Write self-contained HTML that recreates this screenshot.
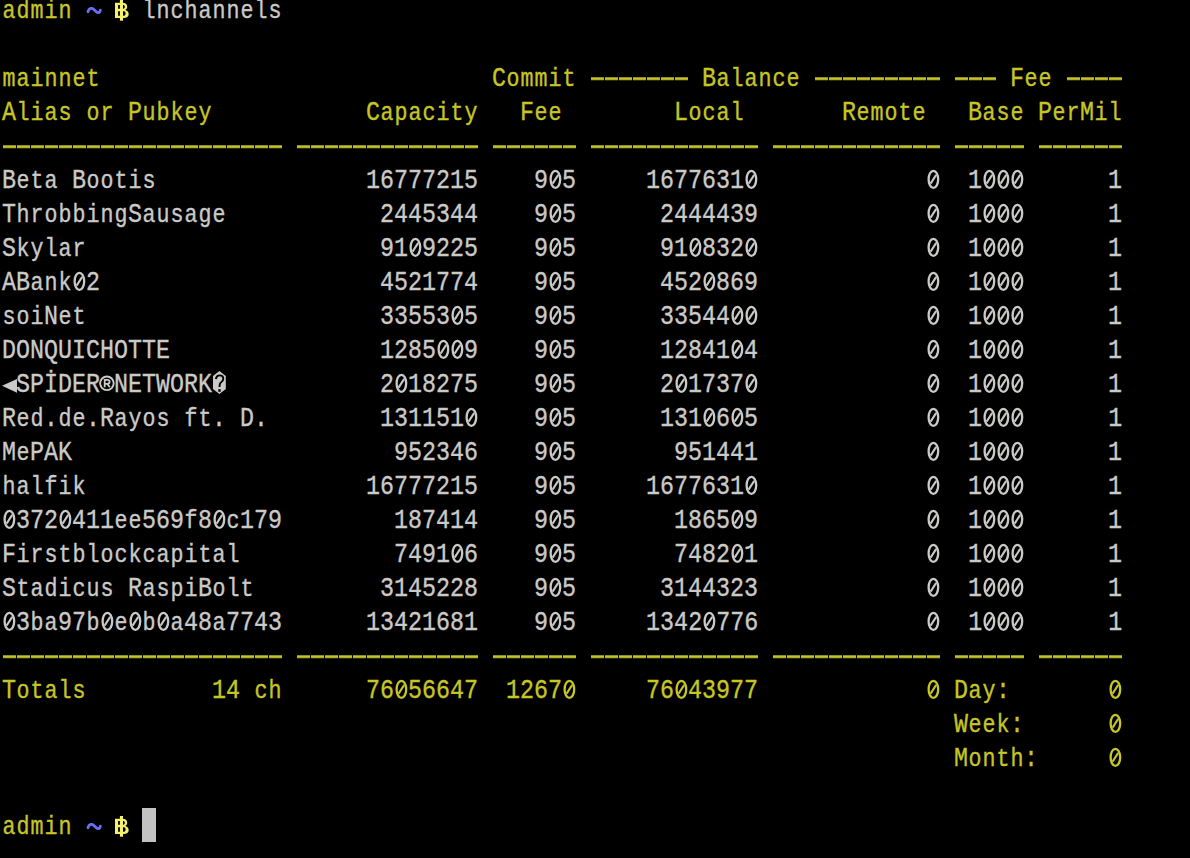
<!DOCTYPE html>
<html><head><meta charset="utf-8"><style>
html,body{margin:0;padding:0;background:#000;}
body{width:1190px;height:858px;overflow:hidden;position:relative;}
.t{position:absolute;white-space:pre;font-family:"Liberation Mono",monospace;font-size:27.8px;line-height:34px;height:34px;transform:scaleX(0.83933);transform-origin:0 0;-webkit-text-stroke:0.35px currentColor;}
.z{position:absolute;display:block}
.l{font-size:25.8px;letter-spacing:1.200px;position:relative;left:0.600px;}
.d{position:absolute;height:4px;background:repeating-linear-gradient(90deg,transparent 0,transparent 13px,#000 13px,#000 14px),linear-gradient(180deg,rgb(140,140,34) 0,rgb(140,140,34) 1px,rgb(195,196,42) 1px,rgb(195,196,42) 2px,rgb(172,174,32) 2px,rgb(172,174,32) 3px,rgb(45,45,8) 3px,rgb(45,45,8) 4px);}
</style></head><body>

<div class="t" style="left:2.00px;top:-6px;color:rgb(198,198,36)"><span class="l">admin</span></div>
<div class="t" style="left:142.00px;top:-6px;color:rgb(202,202,200)"><span class="l">lnchannels</span></div>
<div class="t" style="left:2.00px;top:62px;color:rgb(198,198,36)"><span class="l">mainnet</span></div>
<div class="t" style="left:492.00px;top:62px;color:rgb(198,198,36)">C<span class="l">ommit</span></div>
<div class="t" style="left:702.00px;top:62px;color:rgb(198,198,36)">B<span class="l">alance</span></div>
<div class="t" style="left:1010.00px;top:62px;color:rgb(198,198,36)">F<span class="l">ee</span></div>
<div class="t" style="left:2.00px;top:96px;color:rgb(198,198,36)">A<span class="l">lias</span> <span class="l">or</span> P<span class="l">ubkey</span></div>
<div class="t" style="left:366.00px;top:96px;color:rgb(198,198,36)">C<span class="l">apacity</span></div>
<div class="t" style="left:520.00px;top:96px;color:rgb(198,198,36)">F<span class="l">ee</span></div>
<div class="t" style="left:674.00px;top:96px;color:rgb(198,198,36)">L<span class="l">ocal</span></div>
<div class="t" style="left:842.00px;top:96px;color:rgb(198,198,36)">R<span class="l">emote</span></div>
<div class="t" style="left:968.00px;top:96px;color:rgb(198,198,36)">B<span class="l">ase</span></div>
<div class="t" style="left:1038.00px;top:96px;color:rgb(198,198,36)">P<span class="l">er</span>M<span class="l">il</span></div>
<div class="t" style="left:2.00px;top:164px;color:rgb(202,202,200)">B<span class="l">eta</span> B<span class="l">ootis</span>               16777215    9 5     1677631                1         1</div>
<div class="t" style="left:2.00px;top:198px;color:rgb(202,202,200)">T<span class="l">hrobbing</span>S<span class="l">ausage</span>           2445344    9 5      2444439               1         1</div>
<div class="t" style="left:2.00px;top:232px;color:rgb(202,202,200)">S<span class="l">kylar</span>                     91 9225    9 5      91 832                1         1</div>
<div class="t" style="left:2.00px;top:266px;color:rgb(202,202,200)">AB<span class="l">ank</span> 2                    4521774    9 5      452 869               1         1</div>
<div class="t" style="left:2.00px;top:300px;color:rgb(202,202,200)"><span class="l">soi</span>N<span class="l">et</span>                     33553 5    9 5      33544                 1         1</div>
<div class="t" style="left:2.00px;top:334px;color:rgb(202,202,200)">DONQUICHOTTE               1285  9    9 5      12841 4               1         1</div>
<div class="t" style="left:2.00px;top:368px;color:rgb(202,202,200)"> SPİDER NETWORK            2 18275    9 5      2 1737                1         1</div>
<div class="t" style="left:2.00px;top:402px;color:rgb(202,202,200)">R<span class="l">ed</span>.<span class="l">de</span>.R<span class="l">ayos</span> <span class="l">ft</span>. D.        131151     9 5      131 6 5               1         1</div>
<div class="t" style="left:2.00px;top:436px;color:rgb(202,202,200)">M<span class="l">e</span>PAK                       952346    9 5       951441               1         1</div>
<div class="t" style="left:2.00px;top:470px;color:rgb(202,202,200)"><span class="l">halfik</span>                    16777215    9 5     1677631                1         1</div>
<div class="t" style="left:2.00px;top:504px;color:rgb(202,202,200)"> 372 411<span class="l">ee</span>569<span class="l">f</span>8 <span class="l">c</span>179        187414    9 5       1865 9               1         1</div>
<div class="t" style="left:2.00px;top:538px;color:rgb(202,202,200)">F<span class="l">irstblockcapital</span>           7491 6    9 5       7482 1               1         1</div>
<div class="t" style="left:2.00px;top:572px;color:rgb(202,202,200)">S<span class="l">tadicus</span> R<span class="l">aspi</span>B<span class="l">olt</span>         3145228    9 5      3144323               1         1</div>
<div class="t" style="left:2.00px;top:606px;color:rgb(202,202,200)"> 3<span class="l">ba</span>97<span class="l">b</span> <span class="l">e</span> <span class="l">b</span> <span class="l">a</span>48<span class="l">a</span>7743      13421681    9 5     1342 776               1         1</div>
<div class="t" style="left:2.00px;top:674px;color:rgb(198,198,36)">T<span class="l">otals</span>         14 <span class="l">ch</span>      76 56647  1267      76 43977              D<span class="l">ay</span>:        </div>
<div class="t" style="left:954.00px;top:708px;color:rgb(198,198,36)">W<span class="l">eek</span>:       </div>
<div class="t" style="left:954.00px;top:742px;color:rgb(198,198,36)">M<span class="l">onth</span>:      </div>
<div class="t" style="left:2.00px;top:810px;color:rgb(198,198,36)"><span class="l">admin</span></div>
<svg class="z" style="left:548px;top:162px" width="14" height="34"><ellipse cx="7.4" cy="17.3" rx="4.8" ry="8.5" fill="none" stroke="rgb(202,202,200)" stroke-width="2.3"/><path d="M4.6 21.6L10.2 12.9" stroke="rgb(202,202,200)" stroke-width="2.0"/></svg>
<svg class="z" style="left:744px;top:162px" width="14" height="34"><ellipse cx="7.4" cy="17.3" rx="4.8" ry="8.5" fill="none" stroke="rgb(202,202,200)" stroke-width="2.3"/><path d="M4.6 21.6L10.2 12.9" stroke="rgb(202,202,200)" stroke-width="2.0"/></svg>
<svg class="z" style="left:926px;top:162px" width="14" height="34"><ellipse cx="7.4" cy="17.3" rx="4.8" ry="8.5" fill="none" stroke="rgb(202,202,200)" stroke-width="2.3"/><path d="M4.6 21.6L10.2 12.9" stroke="rgb(202,202,200)" stroke-width="2.0"/></svg>
<svg class="z" style="left:982px;top:162px" width="14" height="34"><ellipse cx="7.4" cy="17.3" rx="4.8" ry="8.5" fill="none" stroke="rgb(202,202,200)" stroke-width="2.3"/><path d="M4.6 21.6L10.2 12.9" stroke="rgb(202,202,200)" stroke-width="2.0"/></svg>
<svg class="z" style="left:996px;top:162px" width="14" height="34"><ellipse cx="7.4" cy="17.3" rx="4.8" ry="8.5" fill="none" stroke="rgb(202,202,200)" stroke-width="2.3"/><path d="M4.6 21.6L10.2 12.9" stroke="rgb(202,202,200)" stroke-width="2.0"/></svg>
<svg class="z" style="left:1010px;top:162px" width="14" height="34"><ellipse cx="7.4" cy="17.3" rx="4.8" ry="8.5" fill="none" stroke="rgb(202,202,200)" stroke-width="2.3"/><path d="M4.6 21.6L10.2 12.9" stroke="rgb(202,202,200)" stroke-width="2.0"/></svg>
<svg class="z" style="left:548px;top:196px" width="14" height="34"><ellipse cx="7.4" cy="17.3" rx="4.8" ry="8.5" fill="none" stroke="rgb(202,202,200)" stroke-width="2.3"/><path d="M4.6 21.6L10.2 12.9" stroke="rgb(202,202,200)" stroke-width="2.0"/></svg>
<svg class="z" style="left:926px;top:196px" width="14" height="34"><ellipse cx="7.4" cy="17.3" rx="4.8" ry="8.5" fill="none" stroke="rgb(202,202,200)" stroke-width="2.3"/><path d="M4.6 21.6L10.2 12.9" stroke="rgb(202,202,200)" stroke-width="2.0"/></svg>
<svg class="z" style="left:982px;top:196px" width="14" height="34"><ellipse cx="7.4" cy="17.3" rx="4.8" ry="8.5" fill="none" stroke="rgb(202,202,200)" stroke-width="2.3"/><path d="M4.6 21.6L10.2 12.9" stroke="rgb(202,202,200)" stroke-width="2.0"/></svg>
<svg class="z" style="left:996px;top:196px" width="14" height="34"><ellipse cx="7.4" cy="17.3" rx="4.8" ry="8.5" fill="none" stroke="rgb(202,202,200)" stroke-width="2.3"/><path d="M4.6 21.6L10.2 12.9" stroke="rgb(202,202,200)" stroke-width="2.0"/></svg>
<svg class="z" style="left:1010px;top:196px" width="14" height="34"><ellipse cx="7.4" cy="17.3" rx="4.8" ry="8.5" fill="none" stroke="rgb(202,202,200)" stroke-width="2.3"/><path d="M4.6 21.6L10.2 12.9" stroke="rgb(202,202,200)" stroke-width="2.0"/></svg>
<svg class="z" style="left:408px;top:230px" width="14" height="34"><ellipse cx="7.4" cy="17.3" rx="4.8" ry="8.5" fill="none" stroke="rgb(202,202,200)" stroke-width="2.3"/><path d="M4.6 21.6L10.2 12.9" stroke="rgb(202,202,200)" stroke-width="2.0"/></svg>
<svg class="z" style="left:548px;top:230px" width="14" height="34"><ellipse cx="7.4" cy="17.3" rx="4.8" ry="8.5" fill="none" stroke="rgb(202,202,200)" stroke-width="2.3"/><path d="M4.6 21.6L10.2 12.9" stroke="rgb(202,202,200)" stroke-width="2.0"/></svg>
<svg class="z" style="left:688px;top:230px" width="14" height="34"><ellipse cx="7.4" cy="17.3" rx="4.8" ry="8.5" fill="none" stroke="rgb(202,202,200)" stroke-width="2.3"/><path d="M4.6 21.6L10.2 12.9" stroke="rgb(202,202,200)" stroke-width="2.0"/></svg>
<svg class="z" style="left:744px;top:230px" width="14" height="34"><ellipse cx="7.4" cy="17.3" rx="4.8" ry="8.5" fill="none" stroke="rgb(202,202,200)" stroke-width="2.3"/><path d="M4.6 21.6L10.2 12.9" stroke="rgb(202,202,200)" stroke-width="2.0"/></svg>
<svg class="z" style="left:926px;top:230px" width="14" height="34"><ellipse cx="7.4" cy="17.3" rx="4.8" ry="8.5" fill="none" stroke="rgb(202,202,200)" stroke-width="2.3"/><path d="M4.6 21.6L10.2 12.9" stroke="rgb(202,202,200)" stroke-width="2.0"/></svg>
<svg class="z" style="left:982px;top:230px" width="14" height="34"><ellipse cx="7.4" cy="17.3" rx="4.8" ry="8.5" fill="none" stroke="rgb(202,202,200)" stroke-width="2.3"/><path d="M4.6 21.6L10.2 12.9" stroke="rgb(202,202,200)" stroke-width="2.0"/></svg>
<svg class="z" style="left:996px;top:230px" width="14" height="34"><ellipse cx="7.4" cy="17.3" rx="4.8" ry="8.5" fill="none" stroke="rgb(202,202,200)" stroke-width="2.3"/><path d="M4.6 21.6L10.2 12.9" stroke="rgb(202,202,200)" stroke-width="2.0"/></svg>
<svg class="z" style="left:1010px;top:230px" width="14" height="34"><ellipse cx="7.4" cy="17.3" rx="4.8" ry="8.5" fill="none" stroke="rgb(202,202,200)" stroke-width="2.3"/><path d="M4.6 21.6L10.2 12.9" stroke="rgb(202,202,200)" stroke-width="2.0"/></svg>
<svg class="z" style="left:72px;top:264px" width="14" height="34"><ellipse cx="7.4" cy="17.3" rx="4.8" ry="8.5" fill="none" stroke="rgb(202,202,200)" stroke-width="2.3"/><path d="M4.6 21.6L10.2 12.9" stroke="rgb(202,202,200)" stroke-width="2.0"/></svg>
<svg class="z" style="left:548px;top:264px" width="14" height="34"><ellipse cx="7.4" cy="17.3" rx="4.8" ry="8.5" fill="none" stroke="rgb(202,202,200)" stroke-width="2.3"/><path d="M4.6 21.6L10.2 12.9" stroke="rgb(202,202,200)" stroke-width="2.0"/></svg>
<svg class="z" style="left:702px;top:264px" width="14" height="34"><ellipse cx="7.4" cy="17.3" rx="4.8" ry="8.5" fill="none" stroke="rgb(202,202,200)" stroke-width="2.3"/><path d="M4.6 21.6L10.2 12.9" stroke="rgb(202,202,200)" stroke-width="2.0"/></svg>
<svg class="z" style="left:926px;top:264px" width="14" height="34"><ellipse cx="7.4" cy="17.3" rx="4.8" ry="8.5" fill="none" stroke="rgb(202,202,200)" stroke-width="2.3"/><path d="M4.6 21.6L10.2 12.9" stroke="rgb(202,202,200)" stroke-width="2.0"/></svg>
<svg class="z" style="left:982px;top:264px" width="14" height="34"><ellipse cx="7.4" cy="17.3" rx="4.8" ry="8.5" fill="none" stroke="rgb(202,202,200)" stroke-width="2.3"/><path d="M4.6 21.6L10.2 12.9" stroke="rgb(202,202,200)" stroke-width="2.0"/></svg>
<svg class="z" style="left:996px;top:264px" width="14" height="34"><ellipse cx="7.4" cy="17.3" rx="4.8" ry="8.5" fill="none" stroke="rgb(202,202,200)" stroke-width="2.3"/><path d="M4.6 21.6L10.2 12.9" stroke="rgb(202,202,200)" stroke-width="2.0"/></svg>
<svg class="z" style="left:1010px;top:264px" width="14" height="34"><ellipse cx="7.4" cy="17.3" rx="4.8" ry="8.5" fill="none" stroke="rgb(202,202,200)" stroke-width="2.3"/><path d="M4.6 21.6L10.2 12.9" stroke="rgb(202,202,200)" stroke-width="2.0"/></svg>
<svg class="z" style="left:450px;top:298px" width="14" height="34"><ellipse cx="7.4" cy="17.3" rx="4.8" ry="8.5" fill="none" stroke="rgb(202,202,200)" stroke-width="2.3"/><path d="M4.6 21.6L10.2 12.9" stroke="rgb(202,202,200)" stroke-width="2.0"/></svg>
<svg class="z" style="left:548px;top:298px" width="14" height="34"><ellipse cx="7.4" cy="17.3" rx="4.8" ry="8.5" fill="none" stroke="rgb(202,202,200)" stroke-width="2.3"/><path d="M4.6 21.6L10.2 12.9" stroke="rgb(202,202,200)" stroke-width="2.0"/></svg>
<svg class="z" style="left:730px;top:298px" width="14" height="34"><ellipse cx="7.4" cy="17.3" rx="4.8" ry="8.5" fill="none" stroke="rgb(202,202,200)" stroke-width="2.3"/><path d="M4.6 21.6L10.2 12.9" stroke="rgb(202,202,200)" stroke-width="2.0"/></svg>
<svg class="z" style="left:744px;top:298px" width="14" height="34"><ellipse cx="7.4" cy="17.3" rx="4.8" ry="8.5" fill="none" stroke="rgb(202,202,200)" stroke-width="2.3"/><path d="M4.6 21.6L10.2 12.9" stroke="rgb(202,202,200)" stroke-width="2.0"/></svg>
<svg class="z" style="left:926px;top:298px" width="14" height="34"><ellipse cx="7.4" cy="17.3" rx="4.8" ry="8.5" fill="none" stroke="rgb(202,202,200)" stroke-width="2.3"/><path d="M4.6 21.6L10.2 12.9" stroke="rgb(202,202,200)" stroke-width="2.0"/></svg>
<svg class="z" style="left:982px;top:298px" width="14" height="34"><ellipse cx="7.4" cy="17.3" rx="4.8" ry="8.5" fill="none" stroke="rgb(202,202,200)" stroke-width="2.3"/><path d="M4.6 21.6L10.2 12.9" stroke="rgb(202,202,200)" stroke-width="2.0"/></svg>
<svg class="z" style="left:996px;top:298px" width="14" height="34"><ellipse cx="7.4" cy="17.3" rx="4.8" ry="8.5" fill="none" stroke="rgb(202,202,200)" stroke-width="2.3"/><path d="M4.6 21.6L10.2 12.9" stroke="rgb(202,202,200)" stroke-width="2.0"/></svg>
<svg class="z" style="left:1010px;top:298px" width="14" height="34"><ellipse cx="7.4" cy="17.3" rx="4.8" ry="8.5" fill="none" stroke="rgb(202,202,200)" stroke-width="2.3"/><path d="M4.6 21.6L10.2 12.9" stroke="rgb(202,202,200)" stroke-width="2.0"/></svg>
<svg class="z" style="left:436px;top:332px" width="14" height="34"><ellipse cx="7.4" cy="17.3" rx="4.8" ry="8.5" fill="none" stroke="rgb(202,202,200)" stroke-width="2.3"/><path d="M4.6 21.6L10.2 12.9" stroke="rgb(202,202,200)" stroke-width="2.0"/></svg>
<svg class="z" style="left:450px;top:332px" width="14" height="34"><ellipse cx="7.4" cy="17.3" rx="4.8" ry="8.5" fill="none" stroke="rgb(202,202,200)" stroke-width="2.3"/><path d="M4.6 21.6L10.2 12.9" stroke="rgb(202,202,200)" stroke-width="2.0"/></svg>
<svg class="z" style="left:548px;top:332px" width="14" height="34"><ellipse cx="7.4" cy="17.3" rx="4.8" ry="8.5" fill="none" stroke="rgb(202,202,200)" stroke-width="2.3"/><path d="M4.6 21.6L10.2 12.9" stroke="rgb(202,202,200)" stroke-width="2.0"/></svg>
<svg class="z" style="left:730px;top:332px" width="14" height="34"><ellipse cx="7.4" cy="17.3" rx="4.8" ry="8.5" fill="none" stroke="rgb(202,202,200)" stroke-width="2.3"/><path d="M4.6 21.6L10.2 12.9" stroke="rgb(202,202,200)" stroke-width="2.0"/></svg>
<svg class="z" style="left:926px;top:332px" width="14" height="34"><ellipse cx="7.4" cy="17.3" rx="4.8" ry="8.5" fill="none" stroke="rgb(202,202,200)" stroke-width="2.3"/><path d="M4.6 21.6L10.2 12.9" stroke="rgb(202,202,200)" stroke-width="2.0"/></svg>
<svg class="z" style="left:982px;top:332px" width="14" height="34"><ellipse cx="7.4" cy="17.3" rx="4.8" ry="8.5" fill="none" stroke="rgb(202,202,200)" stroke-width="2.3"/><path d="M4.6 21.6L10.2 12.9" stroke="rgb(202,202,200)" stroke-width="2.0"/></svg>
<svg class="z" style="left:996px;top:332px" width="14" height="34"><ellipse cx="7.4" cy="17.3" rx="4.8" ry="8.5" fill="none" stroke="rgb(202,202,200)" stroke-width="2.3"/><path d="M4.6 21.6L10.2 12.9" stroke="rgb(202,202,200)" stroke-width="2.0"/></svg>
<svg class="z" style="left:1010px;top:332px" width="14" height="34"><ellipse cx="7.4" cy="17.3" rx="4.8" ry="8.5" fill="none" stroke="rgb(202,202,200)" stroke-width="2.3"/><path d="M4.6 21.6L10.2 12.9" stroke="rgb(202,202,200)" stroke-width="2.0"/></svg>
<svg class="z" style="left:394px;top:366px" width="14" height="34"><ellipse cx="7.4" cy="17.3" rx="4.8" ry="8.5" fill="none" stroke="rgb(202,202,200)" stroke-width="2.3"/><path d="M4.6 21.6L10.2 12.9" stroke="rgb(202,202,200)" stroke-width="2.0"/></svg>
<svg class="z" style="left:548px;top:366px" width="14" height="34"><ellipse cx="7.4" cy="17.3" rx="4.8" ry="8.5" fill="none" stroke="rgb(202,202,200)" stroke-width="2.3"/><path d="M4.6 21.6L10.2 12.9" stroke="rgb(202,202,200)" stroke-width="2.0"/></svg>
<svg class="z" style="left:674px;top:366px" width="14" height="34"><ellipse cx="7.4" cy="17.3" rx="4.8" ry="8.5" fill="none" stroke="rgb(202,202,200)" stroke-width="2.3"/><path d="M4.6 21.6L10.2 12.9" stroke="rgb(202,202,200)" stroke-width="2.0"/></svg>
<svg class="z" style="left:744px;top:366px" width="14" height="34"><ellipse cx="7.4" cy="17.3" rx="4.8" ry="8.5" fill="none" stroke="rgb(202,202,200)" stroke-width="2.3"/><path d="M4.6 21.6L10.2 12.9" stroke="rgb(202,202,200)" stroke-width="2.0"/></svg>
<svg class="z" style="left:926px;top:366px" width="14" height="34"><ellipse cx="7.4" cy="17.3" rx="4.8" ry="8.5" fill="none" stroke="rgb(202,202,200)" stroke-width="2.3"/><path d="M4.6 21.6L10.2 12.9" stroke="rgb(202,202,200)" stroke-width="2.0"/></svg>
<svg class="z" style="left:982px;top:366px" width="14" height="34"><ellipse cx="7.4" cy="17.3" rx="4.8" ry="8.5" fill="none" stroke="rgb(202,202,200)" stroke-width="2.3"/><path d="M4.6 21.6L10.2 12.9" stroke="rgb(202,202,200)" stroke-width="2.0"/></svg>
<svg class="z" style="left:996px;top:366px" width="14" height="34"><ellipse cx="7.4" cy="17.3" rx="4.8" ry="8.5" fill="none" stroke="rgb(202,202,200)" stroke-width="2.3"/><path d="M4.6 21.6L10.2 12.9" stroke="rgb(202,202,200)" stroke-width="2.0"/></svg>
<svg class="z" style="left:1010px;top:366px" width="14" height="34"><ellipse cx="7.4" cy="17.3" rx="4.8" ry="8.5" fill="none" stroke="rgb(202,202,200)" stroke-width="2.3"/><path d="M4.6 21.6L10.2 12.9" stroke="rgb(202,202,200)" stroke-width="2.0"/></svg>
<svg class="z" style="left:464px;top:400px" width="14" height="34"><ellipse cx="7.4" cy="17.3" rx="4.8" ry="8.5" fill="none" stroke="rgb(202,202,200)" stroke-width="2.3"/><path d="M4.6 21.6L10.2 12.9" stroke="rgb(202,202,200)" stroke-width="2.0"/></svg>
<svg class="z" style="left:548px;top:400px" width="14" height="34"><ellipse cx="7.4" cy="17.3" rx="4.8" ry="8.5" fill="none" stroke="rgb(202,202,200)" stroke-width="2.3"/><path d="M4.6 21.6L10.2 12.9" stroke="rgb(202,202,200)" stroke-width="2.0"/></svg>
<svg class="z" style="left:702px;top:400px" width="14" height="34"><ellipse cx="7.4" cy="17.3" rx="4.8" ry="8.5" fill="none" stroke="rgb(202,202,200)" stroke-width="2.3"/><path d="M4.6 21.6L10.2 12.9" stroke="rgb(202,202,200)" stroke-width="2.0"/></svg>
<svg class="z" style="left:730px;top:400px" width="14" height="34"><ellipse cx="7.4" cy="17.3" rx="4.8" ry="8.5" fill="none" stroke="rgb(202,202,200)" stroke-width="2.3"/><path d="M4.6 21.6L10.2 12.9" stroke="rgb(202,202,200)" stroke-width="2.0"/></svg>
<svg class="z" style="left:926px;top:400px" width="14" height="34"><ellipse cx="7.4" cy="17.3" rx="4.8" ry="8.5" fill="none" stroke="rgb(202,202,200)" stroke-width="2.3"/><path d="M4.6 21.6L10.2 12.9" stroke="rgb(202,202,200)" stroke-width="2.0"/></svg>
<svg class="z" style="left:982px;top:400px" width="14" height="34"><ellipse cx="7.4" cy="17.3" rx="4.8" ry="8.5" fill="none" stroke="rgb(202,202,200)" stroke-width="2.3"/><path d="M4.6 21.6L10.2 12.9" stroke="rgb(202,202,200)" stroke-width="2.0"/></svg>
<svg class="z" style="left:996px;top:400px" width="14" height="34"><ellipse cx="7.4" cy="17.3" rx="4.8" ry="8.5" fill="none" stroke="rgb(202,202,200)" stroke-width="2.3"/><path d="M4.6 21.6L10.2 12.9" stroke="rgb(202,202,200)" stroke-width="2.0"/></svg>
<svg class="z" style="left:1010px;top:400px" width="14" height="34"><ellipse cx="7.4" cy="17.3" rx="4.8" ry="8.5" fill="none" stroke="rgb(202,202,200)" stroke-width="2.3"/><path d="M4.6 21.6L10.2 12.9" stroke="rgb(202,202,200)" stroke-width="2.0"/></svg>
<svg class="z" style="left:548px;top:434px" width="14" height="34"><ellipse cx="7.4" cy="17.3" rx="4.8" ry="8.5" fill="none" stroke="rgb(202,202,200)" stroke-width="2.3"/><path d="M4.6 21.6L10.2 12.9" stroke="rgb(202,202,200)" stroke-width="2.0"/></svg>
<svg class="z" style="left:926px;top:434px" width="14" height="34"><ellipse cx="7.4" cy="17.3" rx="4.8" ry="8.5" fill="none" stroke="rgb(202,202,200)" stroke-width="2.3"/><path d="M4.6 21.6L10.2 12.9" stroke="rgb(202,202,200)" stroke-width="2.0"/></svg>
<svg class="z" style="left:982px;top:434px" width="14" height="34"><ellipse cx="7.4" cy="17.3" rx="4.8" ry="8.5" fill="none" stroke="rgb(202,202,200)" stroke-width="2.3"/><path d="M4.6 21.6L10.2 12.9" stroke="rgb(202,202,200)" stroke-width="2.0"/></svg>
<svg class="z" style="left:996px;top:434px" width="14" height="34"><ellipse cx="7.4" cy="17.3" rx="4.8" ry="8.5" fill="none" stroke="rgb(202,202,200)" stroke-width="2.3"/><path d="M4.6 21.6L10.2 12.9" stroke="rgb(202,202,200)" stroke-width="2.0"/></svg>
<svg class="z" style="left:1010px;top:434px" width="14" height="34"><ellipse cx="7.4" cy="17.3" rx="4.8" ry="8.5" fill="none" stroke="rgb(202,202,200)" stroke-width="2.3"/><path d="M4.6 21.6L10.2 12.9" stroke="rgb(202,202,200)" stroke-width="2.0"/></svg>
<svg class="z" style="left:548px;top:468px" width="14" height="34"><ellipse cx="7.4" cy="17.3" rx="4.8" ry="8.5" fill="none" stroke="rgb(202,202,200)" stroke-width="2.3"/><path d="M4.6 21.6L10.2 12.9" stroke="rgb(202,202,200)" stroke-width="2.0"/></svg>
<svg class="z" style="left:744px;top:468px" width="14" height="34"><ellipse cx="7.4" cy="17.3" rx="4.8" ry="8.5" fill="none" stroke="rgb(202,202,200)" stroke-width="2.3"/><path d="M4.6 21.6L10.2 12.9" stroke="rgb(202,202,200)" stroke-width="2.0"/></svg>
<svg class="z" style="left:926px;top:468px" width="14" height="34"><ellipse cx="7.4" cy="17.3" rx="4.8" ry="8.5" fill="none" stroke="rgb(202,202,200)" stroke-width="2.3"/><path d="M4.6 21.6L10.2 12.9" stroke="rgb(202,202,200)" stroke-width="2.0"/></svg>
<svg class="z" style="left:982px;top:468px" width="14" height="34"><ellipse cx="7.4" cy="17.3" rx="4.8" ry="8.5" fill="none" stroke="rgb(202,202,200)" stroke-width="2.3"/><path d="M4.6 21.6L10.2 12.9" stroke="rgb(202,202,200)" stroke-width="2.0"/></svg>
<svg class="z" style="left:996px;top:468px" width="14" height="34"><ellipse cx="7.4" cy="17.3" rx="4.8" ry="8.5" fill="none" stroke="rgb(202,202,200)" stroke-width="2.3"/><path d="M4.6 21.6L10.2 12.9" stroke="rgb(202,202,200)" stroke-width="2.0"/></svg>
<svg class="z" style="left:1010px;top:468px" width="14" height="34"><ellipse cx="7.4" cy="17.3" rx="4.8" ry="8.5" fill="none" stroke="rgb(202,202,200)" stroke-width="2.3"/><path d="M4.6 21.6L10.2 12.9" stroke="rgb(202,202,200)" stroke-width="2.0"/></svg>
<svg class="z" style="left:2px;top:502px" width="14" height="34"><ellipse cx="7.4" cy="17.3" rx="4.8" ry="8.5" fill="none" stroke="rgb(202,202,200)" stroke-width="2.3"/><path d="M4.6 21.6L10.2 12.9" stroke="rgb(202,202,200)" stroke-width="2.0"/></svg>
<svg class="z" style="left:58px;top:502px" width="14" height="34"><ellipse cx="7.4" cy="17.3" rx="4.8" ry="8.5" fill="none" stroke="rgb(202,202,200)" stroke-width="2.3"/><path d="M4.6 21.6L10.2 12.9" stroke="rgb(202,202,200)" stroke-width="2.0"/></svg>
<svg class="z" style="left:212px;top:502px" width="14" height="34"><ellipse cx="7.4" cy="17.3" rx="4.8" ry="8.5" fill="none" stroke="rgb(202,202,200)" stroke-width="2.3"/><path d="M4.6 21.6L10.2 12.9" stroke="rgb(202,202,200)" stroke-width="2.0"/></svg>
<svg class="z" style="left:548px;top:502px" width="14" height="34"><ellipse cx="7.4" cy="17.3" rx="4.8" ry="8.5" fill="none" stroke="rgb(202,202,200)" stroke-width="2.3"/><path d="M4.6 21.6L10.2 12.9" stroke="rgb(202,202,200)" stroke-width="2.0"/></svg>
<svg class="z" style="left:730px;top:502px" width="14" height="34"><ellipse cx="7.4" cy="17.3" rx="4.8" ry="8.5" fill="none" stroke="rgb(202,202,200)" stroke-width="2.3"/><path d="M4.6 21.6L10.2 12.9" stroke="rgb(202,202,200)" stroke-width="2.0"/></svg>
<svg class="z" style="left:926px;top:502px" width="14" height="34"><ellipse cx="7.4" cy="17.3" rx="4.8" ry="8.5" fill="none" stroke="rgb(202,202,200)" stroke-width="2.3"/><path d="M4.6 21.6L10.2 12.9" stroke="rgb(202,202,200)" stroke-width="2.0"/></svg>
<svg class="z" style="left:982px;top:502px" width="14" height="34"><ellipse cx="7.4" cy="17.3" rx="4.8" ry="8.5" fill="none" stroke="rgb(202,202,200)" stroke-width="2.3"/><path d="M4.6 21.6L10.2 12.9" stroke="rgb(202,202,200)" stroke-width="2.0"/></svg>
<svg class="z" style="left:996px;top:502px" width="14" height="34"><ellipse cx="7.4" cy="17.3" rx="4.8" ry="8.5" fill="none" stroke="rgb(202,202,200)" stroke-width="2.3"/><path d="M4.6 21.6L10.2 12.9" stroke="rgb(202,202,200)" stroke-width="2.0"/></svg>
<svg class="z" style="left:1010px;top:502px" width="14" height="34"><ellipse cx="7.4" cy="17.3" rx="4.8" ry="8.5" fill="none" stroke="rgb(202,202,200)" stroke-width="2.3"/><path d="M4.6 21.6L10.2 12.9" stroke="rgb(202,202,200)" stroke-width="2.0"/></svg>
<svg class="z" style="left:450px;top:536px" width="14" height="34"><ellipse cx="7.4" cy="17.3" rx="4.8" ry="8.5" fill="none" stroke="rgb(202,202,200)" stroke-width="2.3"/><path d="M4.6 21.6L10.2 12.9" stroke="rgb(202,202,200)" stroke-width="2.0"/></svg>
<svg class="z" style="left:548px;top:536px" width="14" height="34"><ellipse cx="7.4" cy="17.3" rx="4.8" ry="8.5" fill="none" stroke="rgb(202,202,200)" stroke-width="2.3"/><path d="M4.6 21.6L10.2 12.9" stroke="rgb(202,202,200)" stroke-width="2.0"/></svg>
<svg class="z" style="left:730px;top:536px" width="14" height="34"><ellipse cx="7.4" cy="17.3" rx="4.8" ry="8.5" fill="none" stroke="rgb(202,202,200)" stroke-width="2.3"/><path d="M4.6 21.6L10.2 12.9" stroke="rgb(202,202,200)" stroke-width="2.0"/></svg>
<svg class="z" style="left:926px;top:536px" width="14" height="34"><ellipse cx="7.4" cy="17.3" rx="4.8" ry="8.5" fill="none" stroke="rgb(202,202,200)" stroke-width="2.3"/><path d="M4.6 21.6L10.2 12.9" stroke="rgb(202,202,200)" stroke-width="2.0"/></svg>
<svg class="z" style="left:982px;top:536px" width="14" height="34"><ellipse cx="7.4" cy="17.3" rx="4.8" ry="8.5" fill="none" stroke="rgb(202,202,200)" stroke-width="2.3"/><path d="M4.6 21.6L10.2 12.9" stroke="rgb(202,202,200)" stroke-width="2.0"/></svg>
<svg class="z" style="left:996px;top:536px" width="14" height="34"><ellipse cx="7.4" cy="17.3" rx="4.8" ry="8.5" fill="none" stroke="rgb(202,202,200)" stroke-width="2.3"/><path d="M4.6 21.6L10.2 12.9" stroke="rgb(202,202,200)" stroke-width="2.0"/></svg>
<svg class="z" style="left:1010px;top:536px" width="14" height="34"><ellipse cx="7.4" cy="17.3" rx="4.8" ry="8.5" fill="none" stroke="rgb(202,202,200)" stroke-width="2.3"/><path d="M4.6 21.6L10.2 12.9" stroke="rgb(202,202,200)" stroke-width="2.0"/></svg>
<svg class="z" style="left:548px;top:570px" width="14" height="34"><ellipse cx="7.4" cy="17.3" rx="4.8" ry="8.5" fill="none" stroke="rgb(202,202,200)" stroke-width="2.3"/><path d="M4.6 21.6L10.2 12.9" stroke="rgb(202,202,200)" stroke-width="2.0"/></svg>
<svg class="z" style="left:926px;top:570px" width="14" height="34"><ellipse cx="7.4" cy="17.3" rx="4.8" ry="8.5" fill="none" stroke="rgb(202,202,200)" stroke-width="2.3"/><path d="M4.6 21.6L10.2 12.9" stroke="rgb(202,202,200)" stroke-width="2.0"/></svg>
<svg class="z" style="left:982px;top:570px" width="14" height="34"><ellipse cx="7.4" cy="17.3" rx="4.8" ry="8.5" fill="none" stroke="rgb(202,202,200)" stroke-width="2.3"/><path d="M4.6 21.6L10.2 12.9" stroke="rgb(202,202,200)" stroke-width="2.0"/></svg>
<svg class="z" style="left:996px;top:570px" width="14" height="34"><ellipse cx="7.4" cy="17.3" rx="4.8" ry="8.5" fill="none" stroke="rgb(202,202,200)" stroke-width="2.3"/><path d="M4.6 21.6L10.2 12.9" stroke="rgb(202,202,200)" stroke-width="2.0"/></svg>
<svg class="z" style="left:1010px;top:570px" width="14" height="34"><ellipse cx="7.4" cy="17.3" rx="4.8" ry="8.5" fill="none" stroke="rgb(202,202,200)" stroke-width="2.3"/><path d="M4.6 21.6L10.2 12.9" stroke="rgb(202,202,200)" stroke-width="2.0"/></svg>
<svg class="z" style="left:2px;top:604px" width="14" height="34"><ellipse cx="7.4" cy="17.3" rx="4.8" ry="8.5" fill="none" stroke="rgb(202,202,200)" stroke-width="2.3"/><path d="M4.6 21.6L10.2 12.9" stroke="rgb(202,202,200)" stroke-width="2.0"/></svg>
<svg class="z" style="left:100px;top:604px" width="14" height="34"><ellipse cx="7.4" cy="17.3" rx="4.8" ry="8.5" fill="none" stroke="rgb(202,202,200)" stroke-width="2.3"/><path d="M4.6 21.6L10.2 12.9" stroke="rgb(202,202,200)" stroke-width="2.0"/></svg>
<svg class="z" style="left:128px;top:604px" width="14" height="34"><ellipse cx="7.4" cy="17.3" rx="4.8" ry="8.5" fill="none" stroke="rgb(202,202,200)" stroke-width="2.3"/><path d="M4.6 21.6L10.2 12.9" stroke="rgb(202,202,200)" stroke-width="2.0"/></svg>
<svg class="z" style="left:156px;top:604px" width="14" height="34"><ellipse cx="7.4" cy="17.3" rx="4.8" ry="8.5" fill="none" stroke="rgb(202,202,200)" stroke-width="2.3"/><path d="M4.6 21.6L10.2 12.9" stroke="rgb(202,202,200)" stroke-width="2.0"/></svg>
<svg class="z" style="left:548px;top:604px" width="14" height="34"><ellipse cx="7.4" cy="17.3" rx="4.8" ry="8.5" fill="none" stroke="rgb(202,202,200)" stroke-width="2.3"/><path d="M4.6 21.6L10.2 12.9" stroke="rgb(202,202,200)" stroke-width="2.0"/></svg>
<svg class="z" style="left:702px;top:604px" width="14" height="34"><ellipse cx="7.4" cy="17.3" rx="4.8" ry="8.5" fill="none" stroke="rgb(202,202,200)" stroke-width="2.3"/><path d="M4.6 21.6L10.2 12.9" stroke="rgb(202,202,200)" stroke-width="2.0"/></svg>
<svg class="z" style="left:926px;top:604px" width="14" height="34"><ellipse cx="7.4" cy="17.3" rx="4.8" ry="8.5" fill="none" stroke="rgb(202,202,200)" stroke-width="2.3"/><path d="M4.6 21.6L10.2 12.9" stroke="rgb(202,202,200)" stroke-width="2.0"/></svg>
<svg class="z" style="left:982px;top:604px" width="14" height="34"><ellipse cx="7.4" cy="17.3" rx="4.8" ry="8.5" fill="none" stroke="rgb(202,202,200)" stroke-width="2.3"/><path d="M4.6 21.6L10.2 12.9" stroke="rgb(202,202,200)" stroke-width="2.0"/></svg>
<svg class="z" style="left:996px;top:604px" width="14" height="34"><ellipse cx="7.4" cy="17.3" rx="4.8" ry="8.5" fill="none" stroke="rgb(202,202,200)" stroke-width="2.3"/><path d="M4.6 21.6L10.2 12.9" stroke="rgb(202,202,200)" stroke-width="2.0"/></svg>
<svg class="z" style="left:1010px;top:604px" width="14" height="34"><ellipse cx="7.4" cy="17.3" rx="4.8" ry="8.5" fill="none" stroke="rgb(202,202,200)" stroke-width="2.3"/><path d="M4.6 21.6L10.2 12.9" stroke="rgb(202,202,200)" stroke-width="2.0"/></svg>
<svg class="z" style="left:394px;top:672px" width="14" height="34"><ellipse cx="7.4" cy="17.3" rx="4.8" ry="8.5" fill="none" stroke="rgb(198,198,36)" stroke-width="2.3"/><path d="M4.6 21.6L10.2 12.9" stroke="rgb(198,198,36)" stroke-width="2.0"/></svg>
<svg class="z" style="left:562px;top:672px" width="14" height="34"><ellipse cx="7.4" cy="17.3" rx="4.8" ry="8.5" fill="none" stroke="rgb(198,198,36)" stroke-width="2.3"/><path d="M4.6 21.6L10.2 12.9" stroke="rgb(198,198,36)" stroke-width="2.0"/></svg>
<svg class="z" style="left:674px;top:672px" width="14" height="34"><ellipse cx="7.4" cy="17.3" rx="4.8" ry="8.5" fill="none" stroke="rgb(198,198,36)" stroke-width="2.3"/><path d="M4.6 21.6L10.2 12.9" stroke="rgb(198,198,36)" stroke-width="2.0"/></svg>
<svg class="z" style="left:926px;top:672px" width="14" height="34"><ellipse cx="7.4" cy="17.3" rx="4.8" ry="8.5" fill="none" stroke="rgb(198,198,36)" stroke-width="2.3"/><path d="M4.6 21.6L10.2 12.9" stroke="rgb(198,198,36)" stroke-width="2.0"/></svg>
<svg class="z" style="left:1108px;top:672px" width="14" height="34"><ellipse cx="7.4" cy="17.3" rx="4.8" ry="8.5" fill="none" stroke="rgb(198,198,36)" stroke-width="2.3"/><path d="M4.6 21.6L10.2 12.9" stroke="rgb(198,198,36)" stroke-width="2.0"/></svg>
<svg class="z" style="left:1108px;top:706px" width="14" height="34"><ellipse cx="7.4" cy="17.3" rx="4.8" ry="8.5" fill="none" stroke="rgb(198,198,36)" stroke-width="2.3"/><path d="M4.6 21.6L10.2 12.9" stroke="rgb(198,198,36)" stroke-width="2.0"/></svg>
<svg class="z" style="left:1108px;top:740px" width="14" height="34"><ellipse cx="7.4" cy="17.3" rx="4.8" ry="8.5" fill="none" stroke="rgb(198,198,36)" stroke-width="2.3"/><path d="M4.6 21.6L10.2 12.9" stroke="rgb(198,198,36)" stroke-width="2.0"/></svg>
<div class="d" style="left:591px;top:77px;width:97px"></div>
<div class="d" style="left:815px;top:77px;width:125px"></div>
<div class="d" style="left:955px;top:77px;width:41px"></div>
<div class="d" style="left:1067px;top:77px;width:55px"></div>
<div class="d" style="left:3px;top:145px;width:279px"></div>
<div class="d" style="left:297px;top:145px;width:181px"></div>
<div class="d" style="left:493px;top:145px;width:83px"></div>
<div class="d" style="left:591px;top:145px;width:167px"></div>
<div class="d" style="left:773px;top:145px;width:167px"></div>
<div class="d" style="left:955px;top:145px;width:69px"></div>
<div class="d" style="left:1039px;top:145px;width:83px"></div>
<div class="d" style="left:3px;top:655px;width:279px"></div>
<div class="d" style="left:297px;top:655px;width:181px"></div>
<div class="d" style="left:493px;top:655px;width:83px"></div>
<div class="d" style="left:591px;top:655px;width:167px"></div>
<div class="d" style="left:773px;top:655px;width:167px"></div>
<div class="d" style="left:955px;top:655px;width:69px"></div>
<div class="d" style="left:1039px;top:655px;width:83px"></div>
<svg style="position:absolute;left:110px;top:0px" width="24" height="24" viewBox="0 0 24 24"><path d="M5 2.8H12.5C15.5 2.8 17.2 4.3 17.2 6.8 17.2 8.5 16.3 9.6 15.2 10 16.8 10.4 18.7 11.6 18.7 14 18.7 16.5 16.8 17.9 13.8 17.9H5ZM8.1 5H13.3C14.4 5 14.8 5.9 14.8 6.85 14.8 7.8 14.4 8.7 13.3 8.7H8.1ZM8.1 11.2H13.9C15.1 11.2 15.6 12.3 15.6 13.45 15.6 14.6 15.1 15.7 13.9 15.7H8.1Z" fill="rgb(245,240,110)" fill-rule="evenodd"/><rect x="9.9" y="0" width="3.1" height="20.7" fill="rgb(245,240,110)"/></svg>
<svg style="position:absolute;left:82px;top:0px" width="24" height="20" viewBox="0 0 24 20"><path d="M6 11.8C6.6 9.2 8.2 8.1 10 8.4 12.3 8.8 13.6 12.3 15.8 12.6 17.3 12.8 18 11.8 18.3 10.2" fill="none" stroke="rgb(108,108,245)" stroke-width="2.8" stroke-linecap="round"/></svg>
<svg style="position:absolute;left:110px;top:816px" width="24" height="24" viewBox="0 0 24 24"><path d="M5 2.8H12.5C15.5 2.8 17.2 4.3 17.2 6.8 17.2 8.5 16.3 9.6 15.2 10 16.8 10.4 18.7 11.6 18.7 14 18.7 16.5 16.8 17.9 13.8 17.9H5ZM8.1 5H13.3C14.4 5 14.8 5.9 14.8 6.85 14.8 7.8 14.4 8.7 13.3 8.7H8.1ZM8.1 11.2H13.9C15.1 11.2 15.6 12.3 15.6 13.45 15.6 14.6 15.1 15.7 13.9 15.7H8.1Z" fill="rgb(245,240,110)" fill-rule="evenodd"/><rect x="9.9" y="0" width="3.1" height="20.7" fill="rgb(245,240,110)"/></svg>
<svg style="position:absolute;left:82px;top:816px" width="24" height="20" viewBox="0 0 24 20"><path d="M6 11.8C6.6 9.2 8.2 8.1 10 8.4 12.3 8.8 13.6 12.3 15.8 12.6 17.3 12.8 18 11.8 18.3 10.2" fill="none" stroke="rgb(108,108,245)" stroke-width="2.8" stroke-linecap="round"/></svg>
<div style="position:absolute;left:142px;top:808px;width:14px;height:34px;background:#c2c2c2"></div>
<svg style="position:absolute;left:0;top:366px" width="40" height="34" viewBox="0 0 40 34"><polygon points="2,19.8 17,13 17,26.7" fill="rgb(202,202,200)"/></svg>
<svg style="position:absolute;left:206px;top:366px" width="28" height="34" viewBox="0 0 28 34"><polygon points="13.4,5 19.8,10 19.8,23 13.4,28 7,23 7,10" fill="rgb(202,202,200)"/><path d="M9.8 13C10.3 10.6 11.7 9.4 13.6 9.4 15.8 9.4 17.3 10.8 17.3 12.8 17.3 14.9 15.7 15.7 14.5 16.9 13.8 17.6 13.5 18.4 13.5 21" fill="none" stroke="#000" stroke-width="1.9"/><rect x="12.3" y="23.2" width="2.4" height="2.6" fill="#000"/></svg>
<svg style="position:absolute;left:98px;top:366px" width="18" height="34" viewBox="0 0 18 34"><circle cx="8.9" cy="17.3" r="6.8" fill="none" stroke="rgb(202,202,200)" stroke-width="1.9"/><path d="M6.7 21.2V13.8H9.4C10.8 13.8 11.6 14.6 11.6 15.8 11.6 17 10.8 17.8 9.4 17.8H6.7M9.2 17.8L11.8 21.2" fill="none" stroke="rgb(202,202,200)" stroke-width="1.8"/></svg>
</body></html>
